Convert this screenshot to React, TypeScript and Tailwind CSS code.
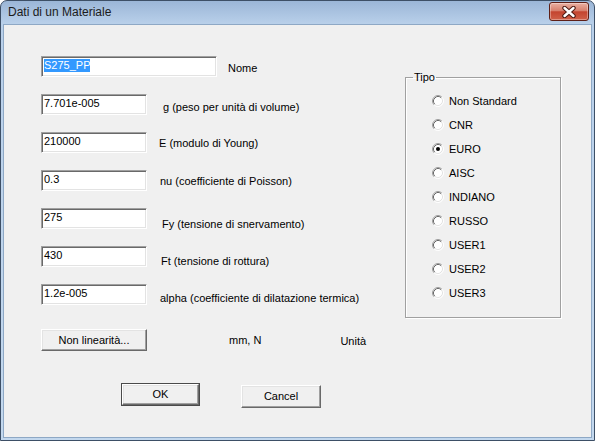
import React from "react";

const fields = [
  { value: "S275_PP", label: "Nome", box: "w-[176px]", label_cls: "ml-[11px] mt-[6px]", selected: true },
  { value: "7.701e-005", label: "g (peso per unità di volume)", box: "w-[106px]", label_cls: "ml-[16px] mt-[7px]" },
  { value: "210000", label: "E (modulo di Young)", box: "w-[106px]", label_cls: "ml-[12px] mt-[5px]" },
  { value: "0.3", label: "nu (coefficiente di Poisson)", box: "w-[106px]", label_cls: "ml-[13px] mt-[5px]" },
  { value: "275", label: "Fy (tensione di snervamento)", box: "w-[106px]", label_cls: "ml-[15px] mt-[10px]" },
  { value: "430", label: "Ft (tensione di rottura)", box: "w-[106px]", label_cls: "ml-[14px] mt-[9px]" },
  { value: "1.2e-005", label: "alpha (coefficiente di dilatazione termica)", box: "w-[106px]", label_cls: "ml-[13px] mt-[8px]" },
];

const tipi = ["Non Standard", "CNR", "EURO", "AISC", "INDIANO", "RUSSO", "USER1", "USER2", "USER3"];

function Radio({ checked }: { checked?: boolean }) {
  return (
    <svg width="12" height="12" viewBox="0 0 12 12" className="shrink-0">
      <circle cx="6" cy="6" r="5" fill="#ffffff" />
      <path d="M2.11 9.89 A5.5 5.5 0 0 1 9.89 2.11" fill="none" stroke="#a0a0a0" strokeWidth="1" />
      <path d="M2.82 9.18 A4.5 4.5 0 0 1 9.18 2.82" fill="none" stroke="#696969" strokeWidth="1" />
      <path d="M9.89 2.11 A5.5 5.5 0 0 1 2.11 9.89" fill="none" stroke="#ffffff" strokeWidth="1" />
      <path d="M9.18 2.82 A4.5 4.5 0 0 1 2.82 9.18" fill="none" stroke="#e3e3e3" strokeWidth="1" />
      {checked && <circle cx="6" cy="6" r="2" fill="#000000" />}
    </svg>
  );
}

function Button({ children, className }: { children: React.ReactNode; className: string }) {
  return (
    <div
      className={`flex items-center justify-center bg-[#f0f0f0] border border-t-white border-l-white border-r-[#696969] border-b-[#696969] shadow-[inset_-1px_-1px_0_#a0a0a0,inset_1px_1px_0_#e3e3e3] ${className}`}
    >
      {children}
    </div>
  );
}

export default function App() {
  return (
    <div className="w-[595px] h-[441px] flex flex-col px-[2px] pb-[2px] border border-[#3d4f66] rounded-t-[7px] bg-[linear-gradient(to_bottom,#9bb6d7_0px,#b9d0ea_23px,#c3d8ee_100%)] font-['Liberation_Sans',Arial,sans-serif] text-[11px] text-black">
      {/* title bar */}
      <div className="h-[23px] flex items-start justify-between">
        <div className="pl-[5px] pt-[4px] text-[12px] text-[#1b1b1b] leading-[15px]">Dati di un Materiale</div>
        <div className="mt-[1px] mr-[3px] w-[40px] h-[19px] rounded-[3px] border border-[#5e1f16] flex items-center justify-center bg-[linear-gradient(to_bottom,#eab0a2_0%,#d7806d_45%,#c4442f_52%,#cf6149_100%)] shadow-[inset_0_0_0_1px_rgba(255,255,255,0.35)]">
          <svg width="14" height="12" viewBox="0 0 14 12">
            <path d="M2.5 2 L11.5 10 M11.5 2 L2.5 10" stroke="#4d1a12" strokeWidth="4.4" strokeLinecap="round" />
            <path d="M2.5 2 L11.5 10 M11.5 2 L2.5 10" stroke="#ffffff" strokeWidth="2.4" strokeLinecap="round" />
          </svg>
        </div>
      </div>

      {/* body */}
      <div className="flex-1 bg-[#f0f0f0] border border-[#8ea8c5] flex flex-col">
        <div className="flex items-start">
          <div className="ml-[37px] mt-[31px] flex flex-col gap-[17px]">
            {fields.map((f) => (
              <div key={f.label} className="flex items-start h-[21px] leading-[13px]">
                <div
                  className={`${f.box} h-[21px] shrink-0 bg-white border border-t-[#a0a0a0] border-l-[#a0a0a0] border-r-white border-b-white shadow-[inset_1px_1px_0_#696969,inset_-1px_-1px_0_#e3e3e3] pl-[2px] pt-[2px]`}
                >
                  {f.selected ? (
                    <span className="bg-[#3399ff] text-white inline-block leading-[13px]">{f.value}</span>
                  ) : (
                    <span>{f.value}</span>
                  )}
                </div>
                <div className={`${f.label_cls} whitespace-nowrap`}>{f.label}</div>
              </div>
            ))}
          </div>

          <fieldset className="ml-auto mr-[30px] mt-[46px] w-[156px] h-[247px] border border-[#a0a0a0] shadow-[inset_1px_1px_0_#ffffff,1px_1px_0_#ffffff]">
            <legend className="ml-[7px] px-[1px] leading-[13px]">Tipo</legend>
            <div className="pl-[26px] pt-[5px] flex flex-col">
              {tipi.map((t) => (
                <div key={t} className="h-[24px] flex items-center gap-[5px] leading-[13px]">
                  <Radio checked={t === "EURO"} />
                  <span>{t}</span>
                </div>
              ))}
            </div>
          </fieldset>
        </div>

        <div className="flex items-center mt-[11px] ml-[37px] leading-[13px]">
          <Button className="w-[106px] h-[22px]">Non linearità...</Button>
          <span className="ml-[82px]">mm, N</span>
          <span className="ml-[79px] pt-[3px]">Unità</span>
        </div>

        <div className="flex items-start mt-[32px] ml-[117px] leading-[13px]">
          <div className="border border-[#4a4a4a]">
            <Button className="w-[77px] h-[21px]">OK</Button>
          </div>
          <Button className="ml-[41px] mt-[2px] w-[80px] h-[23px]">Cancel</Button>
        </div>
      </div>
    </div>
  );
}
